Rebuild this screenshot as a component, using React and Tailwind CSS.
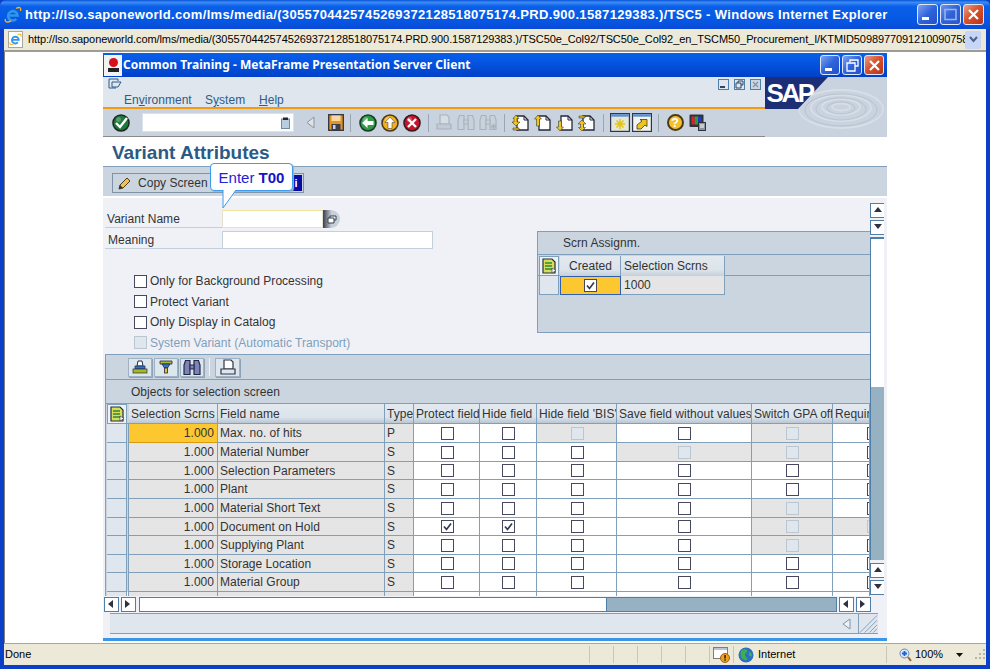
const FIELDS = [
  "Max. no. of hits", "Material Number", "Selection Parameters", "Plant", "Material Short Text",
  "Document on Hold", "Supplying Plant", "Storage Location", "Material Group",
];
const TYPES = ["P", "S", "S", "S", "S", "S", "S", "S", "S"];
const SWITCH_OFF = [0, 1, 4, 5, 6];
const ROW_HEIGHTS = ["h-[19px]", "h-[19px]", "h-[18px]", "h-[19px]", "h-[19px]", "h-[18px]", "h-[19px]", "h-[18px]", "h-[19px]"];
const COLS = "grid grid-cols-[20px_2px_89px_167px_29px_66px_57px_80px_135px_81px_37px]";

function Box({ checked, disabled, className = "" }) {
  return (
    <span className={`flex h-[13px] w-[13px] shrink-0 items-center justify-center border ${disabled ? "border-[#bcc6d0] bg-[#dfe6ee]" : "border-[#45485f] bg-white"} ${className}`}>
      {checked && (
        <svg width="9" height="9" viewBox="0 0 9 9"><path d="M1 4.500 L3.500 7.500 L8 1.500" fill="none" stroke="#333a4a" strokeWidth="1.700" /></svg>
      )}
    </span>
  );
}

function XpButton({ kind, color = "blue", dim, small }) {
  const bg = color === "red"
    ? "bg-[linear-gradient(135deg,#e8a08a,#d9532c_45%,#b8321a)]"
    : dim
      ? "bg-[linear-gradient(135deg,#6f93e8,#2f62d8_50%,#2a58cc)]"
      : "bg-[linear-gradient(135deg,#7fa4f0,#2e63dc_50%,#2450c8)]";
  return (
    <span className={`flex items-center justify-center rounded-[3px] border border-[#dfe8fb] ${bg} ${small ? "h-[20px] w-[20px]" : "h-[21px] w-[21px]"} ${dim ? "border-[#7f9fe6]" : ""}`}>
      <svg width="15" height="15" viewBox="0 0 15 15">
        {kind === "min" && <rect x="2" y="10" width="7" height="3" fill="#fff" />}
        {kind === "max" && <rect x="2" y="2.500" width="11" height="10" fill="none" stroke={dim ? "#9db6ee" : "#fff"} strokeWidth="1.500" />}
        {kind === "restore" && <path d="M5 4V2h8v6h-3M2 5h8v8H2z" fill="none" stroke="#fff" strokeWidth="1.300" />}
        {kind === "close" && <path d="M3 3 L12 12 M12 3 L3 12" stroke="#fff" strokeWidth="2.200" />}
      </svg>
    </span>
  );
}

function IeLogo({ size = 18 }) {
  return (
    <svg width={size} height={size} viewBox="0 0 18 18" className="shrink-0">
      <path d="M4.500 9.500H13.500A4.700 4.700 0 1 0 12.300 13" fill="none" stroke="#2f97ea" strokeWidth="2.600" />
      <path d="M1.500 13C.5 16 3 17 7 15M12 2.500C15 .8 17.500 1.200 16.500 5" fill="none" stroke="#f0b020" strokeWidth="1.400" />
    </svg>
  );
}

function RoundIcon({ fill, ring, children }) {
  return (
    <svg width="18" height="18" viewBox="0 0 18 18">
      <circle cx="9" cy="9" r="8" fill={fill} stroke={ring} strokeWidth="1.600" />
      <circle cx="6.500" cy="5.500" r="2.500" fill="#fff" opacity=".25" />
      {children}
    </svg>
  );
}

const GreenCheck = () => (
  <RoundIcon fill="#1f7a3a" ring="#1c2b24"><path d="M4 9 L8 13 L15 4" fill="none" stroke="#fff" strokeWidth="2.400" /></RoundIcon>
);
const GreenBack = () => (
  <RoundIcon fill="#2e9a45" ring="#1c3a2a"><path d="M3 9 L8.500 4 V7 H14.500 V11 H8.500 V14 Z" fill="#fff" /></RoundIcon>
);
const YellowUp = () => (
  <RoundIcon fill="#f2b01e" ring="#4a3a1a"><path d="M9 3 L14 8.500 H11 V14.500 H7 V8.500 H4 Z" fill="#fff" stroke="#333" strokeWidth=".5" /></RoundIcon>
);
const RedCancel = () => (
  <RoundIcon fill="#c8142a" ring="#3a1a20"><path d="M5 5 L13 13 M13 5 L5 13" stroke="#fff" strokeWidth="2.400" /></RoundIcon>
);

function Floppy() {
  return (
    <svg width="16" height="17" viewBox="0 0 16 17" className="shrink-0">
      <rect x=".7" y=".7" width="14.600" height="15.600" fill="#e8931f" stroke="#2f3340" strokeWidth="1.300" />
      <rect x="3.500" y="1.500" width="9" height="5.500" fill="#f6d9a5" />
      <rect x="3.500" y="10" width="9" height="6" fill="#3a3f50" />
      <rect x="5" y="11" width="2.500" height="4" fill="#c9d3df" />
    </svg>
  );
}

function Printer({ muted }) {
  const line = muted ? "#a9b3bd" : "#30364a";
  return (
    <svg width="16" height="17" viewBox="0 0 16 17">
      <path d="M4 1h7l2 2v7H4z" fill={muted ? "#d6dde5" : "#fff"} stroke={line} strokeWidth="1.200" />
      <path d="M1 10h14v5H1z" fill={muted ? "#c2cbd5" : "#dfe6ee"} stroke={line} strokeWidth="1.200" />
    </svg>
  );
}

function Binoculars({ muted, plus }) {
  const line = muted ? "#a9b3bd" : "#23284a";
  const fill = muted ? "#c9d2db" : "#7d83b5";
  return (
    <svg width="18" height="17" viewBox="0 0 18 17">
      <path d="M2.500 1.500h4.500v14H1V6zM15.500 1.500H11v14h6V6z" fill={fill} stroke={line} strokeWidth="1.200" />
      <rect x="7" y="6" width="4" height="4" fill={fill} stroke={line} />
      {plus && <path d="M12 12.500h5M14.500 10v5" stroke={line} strokeWidth="1.800" />}
    </svg>
  );
}

function PageNav({ mark }) {
  return (
    <svg width="18" height="18" viewBox="0 0 18 18">
      <path d="M5 2h7l4 4v10H5z" fill="#fff" stroke="#25293a" strokeWidth="1.300" />
      <path d="M12 2v4h4" fill="none" stroke="#25293a" />
      {mark === "first" && <path d="M4 1l3 3.500H5V8h3l-4 4-4-4h2V4.500H1zM1 14h6v2H1z" fill="#f0c419" stroke="#222" strokeWidth=".5" />}
      {mark === "up" && <path d="M4 1l3.500 4H5.500v7h-3V5H.500z" fill="#f0c419" stroke="#222" strokeWidth=".5" />}
      {mark === "down" && <path d="M4 17l3.500-4H5.500V7h-3v6H.500z" fill="#f0c419" stroke="#222" strokeWidth=".5" />}
      {mark === "last" && <path d="M1 2h6v2H1zM4 17l3.500-3.500H5.500V10H8L4 6 0 10h2.500v3.500H.500z" fill="#f0c419" stroke="#222" strokeWidth=".5" />}
    </svg>
  );
}

function LayoutIcon() {
  return (
    <svg width="20" height="19" viewBox="0 0 20 19">
      <rect x=".6" y=".6" width="18.800" height="17.800" fill="#e4e6d8" stroke="#30364a" strokeWidth="1.200" />
      <rect x="1.200" y="1.200" width="17.600" height="2.500" fill="#5b8fd0" />
      <path d="M10 6v10M5 11h10M6.500 7.500l7 7M13.500 7.500l-7 7" stroke="#e6c414" strokeWidth="1.500" />
    </svg>
  );
}

function ShortcutIcon() {
  return (
    <svg width="20" height="19" viewBox="0 0 20 19">
      <rect x=".6" y=".6" width="18.800" height="17.800" fill="#f4f4ee" stroke="#30364a" strokeWidth="1.200" />
      <rect x="1.200" y="1.200" width="17.600" height="2.500" fill="#5b8fd0" />
      <path d="M5 16V12l5-4-2-1.500h7v7L13 12l-4 4z" fill="#f0c419" stroke="#222" strokeWidth=".7" />
    </svg>
  );
}

function HelpIcon() {
  return (
    <span className="flex h-[17px] w-[17px] items-center justify-center rounded-full border-2 border-[#4a3a1a] bg-[#f3c02a] font-['Liberation_Sans',sans-serif] text-[13px] font-bold leading-none text-white">?</span>
  );
}

function ColorsIcon() {
  return (
    <svg width="17" height="17" viewBox="0 0 17 17">
      <rect x=".5" y=".5" width="14" height="12.500" rx="1" fill="#30323c" />
      <rect x="2.500" y="2.500" width="3.300" height="8" fill="#d8242a" />
      <rect x="5.800" y="2.500" width="3.300" height="8" fill="#24a040" />
      <rect x="9.100" y="2.500" width="3.500" height="8" fill="#2438c8" />
      <rect x="9.500" y="8.500" width="7" height="8" fill="#8d939c" stroke="#30323c" />
      <path d="M11 11h4M11 13h4" stroke="#fff" />
    </svg>
  );
}

function Sep() {
  return <span className="mx-auto h-[18px] w-px bg-[#9aa6b2]" />;
}

function Slot({ children, w = "w-[22px]" }) {
  return <span className={`flex h-full shrink-0 items-center justify-center ${w}`}>{children}</span>;
}

function SapLogo() {
  return (
    <svg width="122" height="60" viewBox="0 0 122 60" className="block">
      <rect width="122" height="60" fill="#c9d3df" />
      <g fill="none" stroke="#dbe1e8" strokeWidth="1.800" opacity=".8">
        <ellipse cx="76" cy="30" rx="9" ry="3.500" />
        <ellipse cx="76" cy="30" rx="19" ry="8" />
        <ellipse cx="76" cy="31" rx="30" ry="13" />
        <ellipse cx="76" cy="32" rx="42" ry="19" />
      </g>
      <g fill="none" stroke="#b5c0cc" strokeWidth="1" opacity=".8">
        <ellipse cx="76" cy="31" rx="14" ry="6" />
        <ellipse cx="76" cy="32" rx="25" ry="11" />
        <ellipse cx="76" cy="33" rx="36" ry="16" />
      </g>
      <path d="M0 0H63L33 32H0Z" fill="#1c2f76" />
      <text x="1.500" y="25" fontFamily="Liberation Sans, sans-serif" fontSize="26" fontWeight="700" letterSpacing="-2.400" fill="#fff">SAP</text>
    </svg>
  );
}

function ScrollButton({ dir, className = "" }) {
  const paths = { up: "M1 6 L5 1 L9 6Z", down: "M1 1 L5 6 L9 1Z", left: "M6 1 L1 5 L6 9Z", right: "M1 1 L6 5 L1 9Z" };
  return (
    <span className={`flex h-[15px] shrink-0 items-center justify-center border border-[#4f7fa6] bg-white ${dir === "up" || dir === "down" ? "w-[14px] border-r-0" : "w-[15px]"} ${className}`}>
      <svg width="10" height="10" viewBox="0 0 10 10"><path d={paths[dir]} fill="#2d3140" /></svg>
    </span>
  );
}

function ListIcon() {
  return (
    <svg width="15" height="16" viewBox="0 0 15 16">
      <path d="M1 1h9l3 3v11H1z" fill="#d9dc5a" stroke="#23303a" strokeWidth="1.200" />
      <path d="M3 5h7M3 8h7M3 11h7" stroke="#2a8a3a" strokeWidth="1.600" />
      <path d="M10 10l4 2.500-4 2.500z" fill="#fff" stroke="#23303a" strokeWidth=".6" />
    </svg>
  );
}

function GridButton({ children, w = "w-[24px]" }) {
  return <span className={`flex h-[19px] items-center justify-center border border-[#9fb2c4] bg-[#dde5ed] shadow-[1px_1px_0_#8ea3b6] ${w}`}>{children}</span>;
}

function HeaderCell({ children, className = "" }) {
  return (
    <div className={`flex h-[20px] items-center overflow-hidden whitespace-nowrap border-r border-b border-[#7f9fbb] bg-[linear-gradient(#e3e9ef,#dbe3eb_70%,#b9c6d3)] pl-[2px] ${className}`}>
      {children}
    </div>
  );
}

function CheckCell({ gray, checked, disabled, left }) {
  return (
    <div className={`flex items-center overflow-hidden border-r border-b border-[#7f9fbb] ${left ? "pl-[34px]" : "justify-center pl-px"} ${gray ? "bg-[#e5e5e5]" : "bg-white"}`}>
      <Box checked={checked} disabled={disabled} />
    </div>
  );
}

function TableRow({ i, field, type }) {
  const switchOff = SWITCH_OFF.includes(i);
  return (
    <div className={`${COLS} ${ROW_HEIGHTS[i]}`}>
      <div className="border-r border-b border-[#7f9fbb] bg-[#dfe6ee]" />
      <div className="border-r border-[#7f9fbb] bg-[#cad5e0]" />
      <div className={`flex items-center justify-end overflow-hidden border-r border-b pr-[3px] ${i === 0 ? "border-[#d89a10] bg-[#fdc82f]" : "border-[#7f9fbb] bg-[#e5e5e5]"}`}>1.000</div>
      <div className="flex items-center border-r border-b border-[#7f9fbb] bg-[#e5e5e5] pl-[2px]">{field}</div>
      <div className="flex items-center border-r border-b border-[#7f9fbb] bg-[#e5e5e5] pl-[2px]">{type}</div>
      <CheckCell checked={i === 5} />
      <CheckCell checked={i === 5} />
      <CheckCell gray={i === 0} disabled={i === 0} />
      <CheckCell gray={i === 1} disabled={i === 1} />
      <CheckCell gray={switchOff} disabled={switchOff} />
      <CheckCell gray={i === 5} disabled={i === 5} left />
    </div>
  );
}

function SapWindow() {
  return (
    <div className="flex h-[588px] w-[784px] flex-col bg-[#f0f1f6] font-['Liberation_Sans',sans-serif] text-[12px] leading-[14px] tracking-[0.03px] text-[#333]">
      {/* citrix title bar */}
      <div className="flex h-[24px] shrink-0 items-center bg-[linear-gradient(#0a5fe6,#0558e4_30%,#0040c8)] pr-[3px]">
        <span className="ml-px flex h-[21px] w-[18px] flex-col items-center justify-center bg-[#f2f2f2]">
          <span className="h-[9px] w-[9px] rounded-full bg-[#d8101c]" />
          <span className="mt-px h-[4px] w-[11px] bg-[#222]" />
        </span>
        <span className="ml-px flex-1 whitespace-nowrap font-['Noto_Sans',sans-serif] text-[12px] font-bold tracking-[0.05px] text-white">Common Training - MetaFrame Presentation Server Client</span>
        <span className="flex gap-[2px]">
          <XpButton kind="min" small />
          <XpButton kind="restore" small />
          <XpButton kind="close" color="red" small />
        </span>
      </div>

      {/* menu + system toolbar */}
      <div className="flex h-[60px] shrink-0 border-b border-[#8a8a8a]">
        <div className="w-[662px]">
          <div className="h-[32px] border-b-[2px] border-[#f39c12] bg-[#dfe6ee] pl-[5px] text-[#2f5c88]">
            <div className="flex h-[14px] items-center justify-between pr-[4px]">
              <svg width="14" height="12" viewBox="0 0 14 12"><path d="M1 1h9v2M1 1v9h7M4 4h9l-3 5H4z" fill="none" stroke="#2f5c88" /></svg>
              <span className="flex gap-[5px]">
                {["min", "restore", "close"].map((k) => (
                  <span key={k} className={`flex h-[11px] w-[11px] items-center justify-center border border-[#4f7fa6] ${k === "close" ? "bg-[#cad5e0]" : "bg-[#dfe6ee]"}`}>
                    <svg width="9" height="9" viewBox="0 0 9 9">
                      {k === "min" && <rect x="1" y="6" width="5" height="2" fill="#27476b" />}
                      {k === "restore" && <path d="M3 3V1h5v4H6M1 3h5v5H1z" fill="none" stroke="#27476b" />}
                      {k === "close" && <path d="M2 2l5 5M7 2l-5 5" stroke="#7f93a8" strokeWidth="1.200" />}
                    </svg>
                  </span>
                ))}
              </span>
            </div>
            <div className="ml-[16px] flex pt-[2px] text-[#2f5c88]">
              <span className="w-[81px]">En<span className="underline">v</span>ironment</span>
              <span className="w-[54px]">S<span className="underline">y</span>stem</span>
              <span><span className="underline">H</span>elp</span>
            </div>
          </div>
          <div className="flex h-[27px] items-center bg-[#c9d3df] pl-[7px]">
            <Slot><GreenCheck /></Slot>
            <span className="ml-[10px] flex h-[19px] w-[152px] shrink-0 items-center justify-end border border-[#dbe2ea] bg-white pr-[3px]">
              <svg width="9" height="12" viewBox="0 0 9 12"><rect x=".5" y="2" width="8" height="9.500" fill="#b9cde0" stroke="#6f8aa3" /><rect x="2" y=".5" width="5" height="2.500" fill="#22262f" /></svg>
            </span>
            <Slot w="w-[33px]"><svg width="9" height="13" viewBox="0 0 9 13"><path d="M8 1 L1 6.500 L8 12Z" fill="#dfe3e8" stroke="#8b949e" /></svg></Slot>
            <Slot w="w-[17px]"><Floppy /></Slot>
            <Slot w="w-[13px]"><Sep /></Slot>
            <Slot><GreenBack /></Slot>
            <Slot><YellowUp /></Slot>
            <Slot><RedCancel /></Slot>
            <Slot w="w-[10px]"><Sep /></Slot>
            <Slot><Printer muted /></Slot>
            <Slot><Binoculars muted /></Slot>
            <Slot><Binoculars muted plus /></Slot>
            <Slot w="w-[11px]"><Sep /></Slot>
            <Slot><PageNav mark="first" /></Slot>
            <Slot><PageNav mark="up" /></Slot>
            <Slot><PageNav mark="down" /></Slot>
            <Slot><PageNav mark="last" /></Slot>
            <Slot w="w-[11px]"><Sep /></Slot>
            <Slot><LayoutIcon /></Slot>
            <Slot><ShortcutIcon /></Slot>
            <Slot w="w-[11px]"><Sep /></Slot>
            <Slot><HelpIcon /></Slot>
            <Slot><ColorsIcon /></Slot>
          </div>
        </div>
        <SapLogo />
      </div>

      {/* screen title */}
      <div className="flex h-[30px] shrink-0 items-center border-b border-[#7f9fbb] bg-white pl-[9px] pt-[3px] text-[19px] font-bold tracking-normal text-[#2b5a85]">Variant Attributes</div>

      {/* application toolbar */}
      <div className="relative h-[31px] shrink-0 border-b-2 border-white bg-[#cad5e0] pl-[9px] pt-[6px]">
        <div className="flex h-[20px] w-[192px] items-center border border-[#7f93a8] pl-[4px]">
          <svg width="15" height="15" viewBox="0 0 15 15"><path d="M2 13l1-4 7-7 3 3-7 7z" fill="#f2c14e" stroke="#4a3a20" /><path d="M2 13l1-4 3 3z" fill="#333" /></svg>
          <span className="ml-[6px]">Copy Screen</span>
          <span className="ml-auto mr-px flex h-[16px] w-[12px] items-center justify-center bg-[#0a0aa8] text-[11px] font-bold text-white">i</span>
        </div>
        {/* callout over the toolbar */}
        <div className="absolute left-[107px] top-[-4px] flex h-[28px] w-[83px] items-center justify-center rounded-[4px] border border-[#3d9bf0] bg-white pt-[2px] text-[15px] tracking-normal text-[#2222dd] shadow-[1px_1px_1px_#9fb2c4]">
          Enter&nbsp;<b className="text-[#1414c8]">T00</b>
        </div>
        <svg width="16" height="20" viewBox="0 0 16 20" className="absolute left-[118.500px] top-[23px]">
          <path d="M1 0 L1 18 L14 0" fill="#fff" stroke="#3d9bf0" />
          <path d="M2 -1 H13 V0 H2Z" fill="#fff" />
        </svg>
      </div>

      {/* body: content + vertical scrollbar */}
      <div className="flex h-[398px] shrink-0">
        <div className="w-[767px]">
          <div className="flex h-[156px]">
            <div className="w-[434px] pl-[2px] pt-[12px]">
              <div className="flex h-[18px]">
                <span className="flex w-[117px] items-center border-b border-[#c3cfdb] pl-[2px]">Variant Name</span>
                <span className="w-[101px] border border-[#e2e2cf] border-t-[#f2e2a0] bg-white" />
                <span className="flex h-[18px] w-[17px] items-center justify-center rounded-r-full bg-[linear-gradient(90deg,#3a3f4a,#c7cfd8_50%)]">
                  <svg width="10" height="9" viewBox="0 0 10 9"><path d="M3 3V1h6v4H7M1 3h6v5H1z" fill="#fff" stroke="#333a4a" /></svg>
                </span>
              </div>
              <div className="mt-[3px] flex h-[18px]">
                <span className="flex w-[117px] items-center border-b border-[#c3cfdb] pl-[3px]">Meaning</span>
                <span className="w-[211px] border border-[#c3cfdb] bg-white" />
              </div>
              <div className="ml-[29px] mt-[22px] flex flex-col">
                {["Only for Background Processing", "Protect Variant", "Only Display in Catalog"].map((label) => (
                  <div key={label} className="flex h-[20.5px] items-center gap-[3px]"><Box />{label}</div>
                ))}
                <div className="flex h-[20.5px] items-center gap-[3px] text-[#7f9fbb]"><Box disabled />System Variant (Automatic Transport)</div>
              </div>
            </div>
            <div className="pt-[33px]">
              <div className="h-[102px] w-[333px] border border-r-0 border-[#7f9fbb] bg-[#cad5e0]">
                <div className="flex h-[23px] items-center border-b border-[#7f9fbb] pl-[25px]">Scrn Assignm.</div>
                <div className="flex h-[21px] border-b border-[#7f9fbb] pl-px pt-px">
                  <span className="flex h-[20px] w-[20px] items-center justify-center border border-[#7f9fbb] bg-[#eef1f5]"><ListIcon /></span>
                  <div className="ml-[1px] flex h-[20px] w-[61px] items-center justify-center border-r border-[#7f9fbb] bg-[linear-gradient(#e3e9ef,#dbe3eb_70%,#c5d0dc)] pl-px">Created</div>
                  <div className="flex h-[20px] w-[104px] items-center border-r border-[#7f9fbb] bg-[linear-gradient(#e3e9ef,#dbe3eb_70%,#c5d0dc)] pl-[3px]">Selection Scrns</div>
                </div>
                <div className="flex h-[19px] pl-px">
                  <span className="w-[20px] border border-t-0 border-[#7f9fbb] bg-[#dfe6ee]" />
                  <span className="ml-px flex w-[61px] items-center justify-center border border-[#2f5fae] bg-[#fdc82f]"><Box checked /></span>
                  <span className="flex w-[104px] items-center border-r border-b border-[#7f9fbb] bg-[#e5e5e5] pl-[3px]">1000</span>
                </div>
              </div>
            </div>
          </div>

          {/* objects grid */}
          <div className="ml-[2px] h-[242px] w-[765px] overflow-hidden border-t border-l border-[#7f9fbb] bg-[#cad5e0]">
            <div className="flex h-[25px] items-center gap-[2px] border-b border-[#7f9fbb] pl-[22px]">
              <GridButton><svg width="16" height="14" viewBox="0 0 16 14"><path d="M6 1h4l1 5H5z" fill="#fff" stroke="#23284a" /><rect x="3" y="6" width="10" height="3" fill="#2a78c8" stroke="#23284a" strokeWidth=".7" /><rect x="1" y="9" width="14" height="4" fill="#a8b820" stroke="#23284a" strokeWidth=".7" /></svg></GridButton>
              <GridButton><svg width="14" height="14" viewBox="0 0 14 14"><path d="M1 1h12v3H1z" fill="#a8b820" stroke="#23284a" strokeWidth=".8" /><path d="M3 4h8L8.500 8H5.500z" fill="#2a78c8" stroke="#23284a" strokeWidth=".8" /><rect x="5.500" y="8" width="3" height="5" fill="#e8c020" stroke="#23284a" strokeWidth=".8" /></svg></GridButton>
              <GridButton><Binoculars /></GridButton>
              <span className="mx-[3px] h-[18px] w-px bg-[#eef1f5]" />
              <GridButton w="w-[25px]"><Printer /></GridButton>
            </div>
            <div className="flex h-[23px] items-center pl-[25px]">Objects for selection screen</div>
            <div className="border-t border-[#7f9fbb] pl-px">
              <div className={COLS}>
                <div className="flex h-[20px] items-center justify-center border border-[#7f9fbb] bg-[#eef1f5]"><ListIcon /></div>
                <div className="border-b border-[#7f9fbb]" />
                <HeaderCell>Selection Scrns</HeaderCell>
                <HeaderCell>Field name</HeaderCell>
                <HeaderCell>Type</HeaderCell>
                <HeaderCell>Protect field</HeaderCell>
                <HeaderCell>Hide field</HeaderCell>
                <HeaderCell>Hide field 'BIS'</HeaderCell>
                <HeaderCell>Save field without values</HeaderCell>
                <HeaderCell>Switch GPA off</HeaderCell>
                <HeaderCell>Required</HeaderCell>
              </div>
              {FIELDS.map((field, i) => (
                <TableRow key={field} i={i} field={field} type={TYPES[i]} />
              ))}
              <div className={`${COLS} h-[6px]`}>
                {Array.from({ length: 11 }, (_, i) => (
                  <div key={i} className={`border-r border-[#7f9fbb] ${i === 0 ? "bg-[#dfe6ee]" : i < 5 && i > 1 ? "bg-[#e5e5e5]" : "bg-white"}`} />
                ))}
              </div>
            </div>
          </div>
        </div>

        {/* vertical scrollbar */}
        <div className="flex w-[17px] flex-col overflow-hidden pt-[5px]">
          <ScrollButton dir="up" />
          <ScrollButton dir="down" className="mt-[2px]" />
          <div className="mt-[2px] h-[150px] w-[14px] border-l border-t-2 border-[#4f7fa6] bg-white" />
          <div className="h-[173px] w-[14px] border-l border-[#4f7fa6] bg-[#95b1c2]" />
          <ScrollButton dir="up" className="mt-[3px]" />
          <ScrollButton dir="down" className="mt-[2px]" />
        </div>
      </div>

      {/* horizontal scrollbar */}
      <div className="flex h-[16px] shrink-0 items-center pl-px">
        <ScrollButton dir="left" />
        <ScrollButton dir="right" className="ml-[2px]" />
        <div className="ml-[3px] h-[15px] w-[467px] border border-r-0 border-[#4f7fa6] bg-white" />
        <div className="h-[15px] w-[231px] border border-[#4f7fa6] bg-[#95b1c2]" />
        <ScrollButton dir="left" className="ml-[2px]" />
        <ScrollButton dir="right" className="ml-[2px]" />
      </div>

      {/* sap status bar */}
      <div className="ml-[7px] mt-px flex h-[21px] w-[768px] shrink-0 items-center justify-end border-y border-[#7f9fbb] bg-[#dfe6ee]">
        <svg width="10" height="12" viewBox="0 0 10 12" className="mr-[6px]"><path d="M8 1 L1 6 L8 11Z" fill="#eef1f5" stroke="#7f93a8" /></svg>
        <svg width="20" height="20" viewBox="0 0 20 20" className="border-l border-[#7f9fbb]"><path d="M19 1 L1 19M19 6 L6 19M19 11 L11 19M19 15 L15 19" stroke="#7f9fbb" /></svg>
      </div>
      <div className="mt-auto h-[3px] shrink-0 bg-[#3d95e8]" />
    </div>
  );
}

export default function App() {
  return (
    <div className="flex h-[669px] w-[990px] flex-col overflow-hidden bg-[#0a3fc8] font-['Liberation_Sans',sans-serif]">
      {/* IE title bar */}
      <div className="flex h-[29px] shrink-0 items-center rounded-t-[6px] bg-[linear-gradient(#0a53d8,#3c8cf5_8%,#0a5fe8_22%,#0558e4_70%,#0a4ad6)] pl-[4px] pr-[6px]">
        <IeLogo />
        <span className="ml-[3px] flex-1 overflow-hidden whitespace-nowrap text-[13px] font-bold tracking-[0.335px] text-white">http://lso.saponeworld.com/lms/media/(3055704425745269372128518075174.PRD.900.1587129383.)/TSC5 - Windows Internet Explorer</span>
        <span className="flex gap-[2px]">
          <XpButton kind="min" />
          <XpButton kind="max" dim />
          <XpButton kind="close" color="red" />
        </span>
      </div>

      <div className="flex min-h-0 flex-1 flex-col border-x-4 border-b-4 border-[#0a3fc8]">
        {/* address bar */}
        <div className="flex h-[23px] shrink-0 items-center border-b-2 border-[#9d9d92] bg-[#ece9d8] pl-[4px] pr-[4px]">
          <span className="flex h-[17px] w-[15px] shrink-0 items-center justify-center border border-[#a8a8a0] bg-white">
            <IeLogo size={13} />
          </span>
          <span className="ml-[5px] w-[937px] overflow-hidden whitespace-nowrap text-[11px] tracking-[-0.09px] text-black">http://lso.saponeworld.com/lms/media/(3055704425745269372128518075174.PRD.900.1587129383.)/TSC50e_Col92/TSC50e_Col92_en_TSCM50_Procurement_I/KTMID50989770912100907586</span>
          <span className="flex h-[18px] w-[16px] items-center justify-center rounded-[2px] border border-[#c8d4f0] bg-[#c6d6f8]">
            <svg width="9" height="7" viewBox="0 0 9 7"><path d="M1 1 L4.500 5 L8 1" fill="none" stroke="#4d6185" strokeWidth="2" /></svg>
          </span>
        </div>

        {/* page area */}
        <div className="min-h-0 flex-1 border-l border-[#808080] bg-white pl-[98px] pt-px">
          <SapWindow />
        </div>

        {/* IE status bar */}
        <div className="flex h-[22px] shrink-0 items-center border-t border-[#aca899] bg-[#ece9d8] text-[11px] text-black">
          <span className="w-[585px] shrink-0 pl-px">Done</span>
          {[0, 1, 2, 3, 4].map((n) => (
            <span key={n} className="h-[17px] w-[24px] shrink-0 border-l border-[#c9c6b4]" />
          ))}
          <span className="flex h-[17px] w-[24px] shrink-0 items-center justify-center border-l border-[#c9c6b4]">
            <svg width="17" height="16" viewBox="0 0 17 16"><rect x=".5" y=".5" width="14" height="11" fill="#fff" stroke="#7d7d7d" /><rect x="1" y="1" width="13" height="2" fill="#b9c4d8" /><circle cx="12" cy="11" r="4.500" fill="#f0a020" stroke="#a06010" /><rect x="11.300" y="8" width="1.500" height="3.500" fill="#222" /><rect x="11.300" y="12.300" width="1.500" height="1.500" fill="#222" /></svg>
          </span>
          <span className="flex h-[17px] w-[153px] shrink-0 items-center border-l border-[#c9c6b4] pl-[4px]">
            <svg width="16" height="16" viewBox="0 0 16 16"><circle cx="8" cy="8" r="7.500" fill="#2a6fc8" /><path d="M3 4c2-2 5-2 6-1 1 2-2 3-2 5s3 2 2 5c-2 1-5-1-6-3 0-2-1-4 0-6zM11 5c2 0 3 2 3 4-1 1-3 0-3-1z" fill="#3fae4a" /></svg>
            <span className="ml-[4px]">Internet</span>
          </span>
          <span className="flex h-[17px] w-[100px] shrink-0 items-center border-l border-[#c9c6b4] pl-[12px]">
            <svg width="13" height="14" viewBox="0 0 13 14"><circle cx="5.500" cy="5.500" r="4.500" fill="#d8e8fa" stroke="#6b87b8" /><path d="M3 5.500h5M5.500 3v5" stroke="#1f5fd0" strokeWidth="1.800" /><path d="M9 9l3 4" stroke="#8a6a30" strokeWidth="2" /></svg>
            <span className="ml-[3px]">100%</span>
            <svg width="7" height="4" viewBox="0 0 7 4" className="ml-[13px]"><path d="M0 0h7L3.500 4z" fill="#111" /></svg>
            <svg width="11" height="11" viewBox="0 0 11 11" className="ml-[12px]" fill="#b8b5a3"><rect x="8" y="0" width="2" height="2" /><rect x="4" y="4" width="2" height="2" /><rect x="8" y="4" width="2" height="2" /><rect x="0" y="8" width="2" height="2" /><rect x="4" y="8" width="2" height="2" /><rect x="8" y="8" width="2" height="2" /></svg>
          </span>
        </div>
      </div>
    </div>
  );
}
